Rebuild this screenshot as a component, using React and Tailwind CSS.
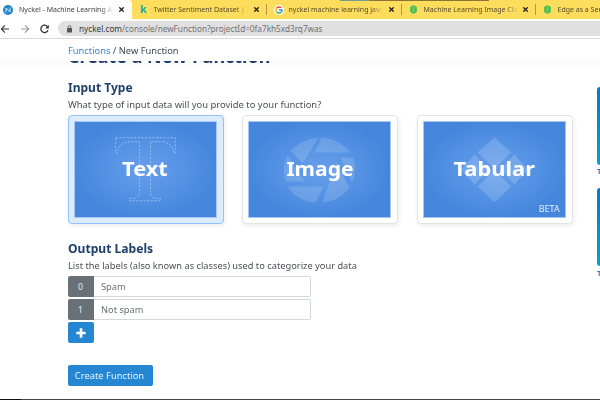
import React from "react";

const tabs = [
  { title: "Twitter Sentiment Dataset | K", icon: "k", width: "w-[135px]" },
  { title: "nyckel machine learning java", icon: "g", width: "w-[135px]" },
  { title: "Machine Learning Image Cla", icon: "c", width: "w-[134px]" },
  { title: "Edge as a Service", icon: "c", width: "w-[134px]" },
];

function Cross() {
  return (
    <svg className="h-[5px] w-[5px] shrink-0" viewBox="0 0 5 5" stroke="#222" strokeWidth="1.3">
      <path d="M.3.3 4.7 4.7M4.7.3.3 4.7" />
    </svg>
  );
}

function Favicon({ kind }) {
  if (kind === "k")
    return <span className="w-[9px] shrink-0 text-[10.5px] leading-none font-bold text-[#16a8b0]">k</span>;
  if (kind === "g")
    return (
      <svg className="-ml-px h-[10px] w-[10px] shrink-0" viewBox="0 0 10 10" fill="none">
        <circle cx="5" cy="5" r="5" fill="#fff" />
        <g strokeWidth="1.5">
          <path d="M7.2 2.8A3.1 3.1 0 0 0 2.3 3.5" stroke="#ea4335" />
          <path d="M2.3 3.5a3.1 3.1 0 0 0 0 3" stroke="#fbbc05" />
          <path d="M2.3 6.5a3.1 3.1 0 0 0 4.8.8" stroke="#34a853" />
          <path d="M7.1 7.3A3 3 0 0 0 8.1 5H5" stroke="#4285f4" />
        </g>
      </svg>
    );
  return (
    <svg className="h-[9px] w-[7px] shrink-0" viewBox="0 0 7 9">
      <path d="M3.5 0 6.8 2v5L3.5 9 .2 7V2Z" fill="#3dba55" />
      <path d="M2.2 2v5M4.8 2v5M3.5 0v9" stroke="#a5cf5a" strokeWidth=".6" />
    </svg>
  );
}

function TabBar() {
  return (
    <header className="relative flex h-[19px] shrink-0 bg-[#ffdd5c]">
      <div className="flex w-[132px] shrink-0 items-center rounded-tr-[4px] bg-white pr-[8px] pl-[3px]">
        <svg className="h-[10px] w-[10px] shrink-0" viewBox="0 0 10 10">
          <circle cx="5" cy="5" r="5" fill="#2583c8" />
          <path d="M3 7.4V3l4 4V2.5" stroke="#d4ebfb" strokeWidth="1" fill="none" />
        </svg>
        <div className="ml-[6px] w-[95px] overflow-hidden pt-px text-[7px] whitespace-nowrap text-[#3d3d46] [mask-image:linear-gradient(to_right,black_86%,transparent)]">
          Nyckel - Machine Learning AI
        </div>
        <span className="ml-auto flex"><Cross /></span>
      </div>
      {tabs.map((t, i) => (
        <div key={i} className={`flex ${t.width} shrink-0 items-center pl-[8px]`}>
          <span className="flex w-[13.5px] shrink-0"><Favicon kind={t.icon} /></span>
          <div className="w-[94px] shrink-0 overflow-hidden pt-px text-[7px] whitespace-nowrap text-[#554b2d] [mask-image:linear-gradient(to_right,black_88%,transparent)]">
            {t.title}
          </div>
          <span className="mr-[7px] ml-auto flex"><Cross /></span>
          <span className="h-[11px] w-px bg-[#ad984b]" />
        </div>
      ))}
      <div className="absolute top-0 left-[340px] h-px w-[30px] bg-[#6f9c8d]" />
      <div className="absolute top-0 left-[370px] h-px w-[119px] bg-[#8e7435]" />
    </header>
  );
}

function Toolbar() {
  return (
    <div className="flex h-[20px] shrink-0 items-center border-b border-[#d9d9db] bg-white">
      <svg className="h-[18px] w-[58px] shrink-0" viewBox="0 0 58 18" fill="none" strokeWidth="1.1">
        <path d="M9 9H1.4M5 5.4 1.4 9 5 12.6" stroke="#333" />
        <path d="M21 9h7.6M25 5.4 28.6 9 25 12.6" stroke="#999" />
        <path d="M47.5 6.6A3.7 3.7 0 1 0 48 10.2" stroke="#333" strokeWidth="1.3" />
        <path d="M48.8 4.8v3.6h-3.6Z" fill="#333" />
      </svg>
      <div className="flex h-[15px] flex-1 items-center rounded-l-full bg-[#e0e0e0] pl-[9px]">
        <svg className="h-[8px] w-[5px] shrink-0" viewBox="0 0 5 8">
          <rect y="3" width="5" height="4.6" rx=".5" fill="#555" />
          <path d="M1.1 3.3V2a1.4 1.4 0 0 1 2.8 0v1.3" fill="none" stroke="#555" strokeWidth=".8" />
        </svg>
        <span className="ml-[7px] inline-block pt-px text-[8.2px] leading-none whitespace-nowrap text-[#707075]">
          <span className="text-[#38383c]">nyckel.com</span>/console/newFunction?projectId=0fa7kh5xd3rq7was
        </span>
      </div>
    </div>
  );
}

function TypeCard({ label, selected, scale, beta, children }) {
  return (
    <div
      className={`h-[109px] w-[156px] shrink-0 rounded-[4px] border p-[5px] pr-[6px] shadow-[1px_2px_5px_rgba(0,0,0,0.08)] ${
        selected ? "border-[#8fc2fb] bg-[#dcebfd]" : "border-[#e2e3e6] bg-white"
      }`}
    >
      <div className="relative flex h-full w-full items-center justify-center border border-[#a5c8f4] bg-[radial-gradient(ellipse_at_center,#689eea_0%,#5492e4_40%,#4586dc_72%)] pb-[2px]">
        <svg className="absolute inset-0 h-full w-full" viewBox="0 0 142 94">{children}</svg>
        <span className={`relative inline-block text-[20px] leading-none font-bold text-white ${scale}`}>{label}</span>
        {beta && <span className="absolute right-[5px] bottom-[4px] origin-right scale-x-[1.12] text-[8px] leading-none text-[#e3edfb]">BETA</span>}
      </div>
    </div>
  );
}

function LabelRow({ index, value }) {
  return (
    <div className="flex h-[21px] w-[243px] text-[8.5px]">
      <span className="flex w-[26px] items-center justify-center rounded-l-[2px] bg-[#687078] pt-px text-[#eceef0]">{index}</span>
      <div className="flex flex-1 items-center rounded-r-[2px] border border-l-0 border-[#d5d9df] bg-white pt-[2px] pl-[7px] text-[#6b6e73]">
        <span className="inline-block origin-left scale-x-[1.09]">{value}</span>
      </div>
    </div>
  );
}

export default function App() {
  return (
    <div className="relative flex h-[400px] w-[600px] flex-col overflow-hidden bg-white font-['Noto_Sans','Open_Sans',sans-serif]">
      <TabBar />
      <Toolbar />
      <nav className="relative z-10 flex h-[22px] shrink-0 items-center bg-white pl-[68px] text-[9px] leading-none text-[#3f4650]">
        <p className="origin-left scale-x-[1.035] whitespace-nowrap">
          <span className="text-[#3e87cb]">Functions</span> / New Function
        </p>
      </nav>
      <div className="flex flex-1 justify-between overflow-hidden bg-[linear-gradient(#f8fafc,white_10px)]">
        <main className="flex w-[506px] flex-col items-start pl-[67.5px]">
          <h1 className="-mt-[16px] h-[22px] origin-left scale-x-[0.995] text-[18px] leading-[22px] font-bold whitespace-nowrap text-[#1b3d68]">
            Create a New Function
          </h1>
          <h2 className="mt-[14px] h-[14px] origin-left scale-x-[1.003] text-[12px] leading-[14px] font-bold whitespace-nowrap text-[#1f4068]">
            Input Type
          </h2>
          <p className="mt-[4px] h-[12px] origin-left scale-x-[1.107] text-[8.5px] leading-[12px] whitespace-nowrap text-[#4b4f55]">
            What type of input data will you provide to your function?
          </p>
          <div className="mt-[4px] flex gap-[18.5px]">
            <TypeCard label="Text" selected scale="scale-x-[1.09]">
              <path
                d="M41 15h60v15.500h-1.500C98 22 93 19 86 19H76v50q0 6 4 7h6v2.500H55V76h6q4-1 4-7V19H56C49 19 44 22 42.500 30.500H41Z"
                fill="none" stroke="#91b9f1" strokeWidth="1" strokeDasharray="2.200 1.500"
              />
            </TypeCard>
            <TypeCard label="Image" scale="scale-x-[1.05]">
              <g fill="#fff" opacity=".14">
                <path d="M70 15Q53 16 42 28L54 41Z" />
                <path d="M73 15Q91 16 102 30H66Z" />
                <path d="M92 35h13q4 14-1 25Z" />
                <path d="M88 40 101 65Q92 79 74 80Z" />
                <path d="M75 64 67 80Q47 78 39 64Z" />
                <path d="M39 33 56 59H37Q32 46 39 33Z" />
              </g>
            </TypeCard>
            <TypeCard label="Tabular" beta scale="scale-x-[1.095]">
              <g fill="#fff" opacity=".16">
                <path d="M71 14.500 88 30 71 46 54 30ZM51 32 65 47 51 62 37 47ZM91 32 105 47 91 62 77 47ZM71 48 88 64 71 80 54 64Z" />
              </g>
            </TypeCard>
          </div>
          <h2 className="mt-[18px] h-[14px] origin-left scale-x-[1.008] text-[12px] leading-[14px] font-bold whitespace-nowrap text-[#1f4068]">
            Output Labels
          </h2>
          <p className="mt-[4px] h-[12px] origin-left scale-x-[1.092] text-[8.5px] leading-[12px] whitespace-nowrap text-[#4b4f55]">
            List the labels (also known as classes) used to categorize your data
          </p>
          <div className="mt-[4px] flex flex-col gap-[2px]">
            <LabelRow index="0" value="Spam" />
            <LabelRow index="1" value="Not spam" />
            <button className="flex h-[21px] w-[26px] items-center justify-center rounded-[2px] bg-[#2586d2]">
              <svg className="h-[10px] w-[10px]" viewBox="0 0 10 10" stroke="#fff" strokeWidth="2.600"><path d="M5 .3v9.400M.3 5h9.400" /></svg>
            </button>
          </div>
          <button className="mt-[22px] flex h-[21px] w-[85px] items-center justify-center rounded-[2px] bg-[#2586d2] pt-px text-[8.5px] whitespace-nowrap text-[#eaf4fd]">
            <span className="inline-block scale-x-[1.1]">Create Function</span>
          </button>
        </main>
        <aside className="mt-[26px] flex w-[3px] flex-col text-[7.5px] leading-none font-bold text-[#3b78bd]">
          <div className="h-[78px] w-[20px] rounded-[3px] bg-linear-to-b from-[#0879c1] to-[#08a1cc]" />
          <span className="mt-[3px] h-[20px]">Text</span>
          <div className="h-[78px] w-[20px] rounded-[3px] bg-linear-to-b from-[#0879c1] to-[#08a1cc]" />
          <span className="mt-[4px]">Text</span>
        </aside>
      </div>
      <footer className="flex h-px shrink-0 bg-[#414346]"><span className="w-[21px] bg-[#111]" /></footer>
    </div>
  );
}
